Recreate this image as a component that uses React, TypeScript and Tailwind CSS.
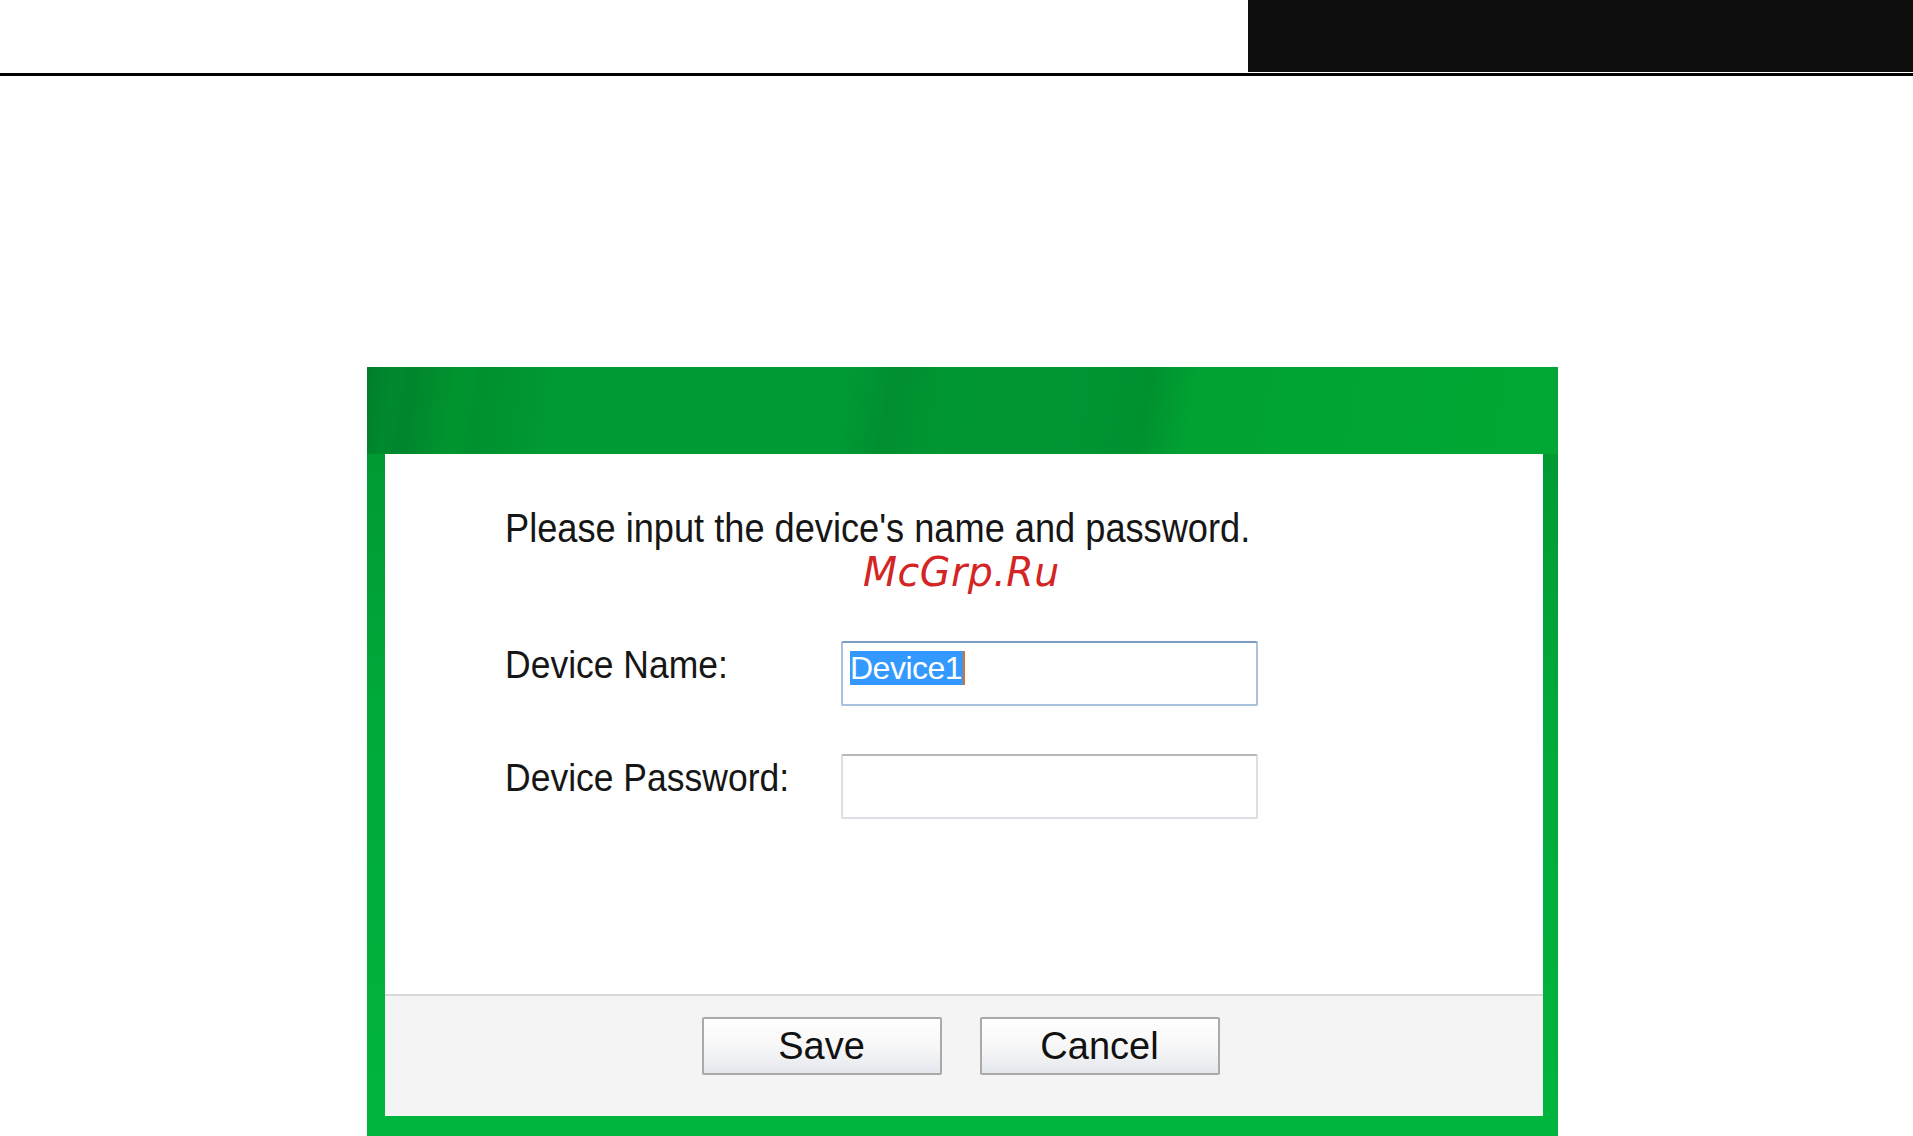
import React from "react";

export default function App() {
  return (
    <div className="w-[1913px] h-[1136px] bg-white overflow-hidden flex flex-col" style={{ fontFamily: '"Liberation Sans", Arial, sans-serif' }}>
      <div className="h-[72px] flex flex-row shrink-0">
        <div className="flex-1" />
        <div className="w-[665px] h-[72px] bg-[#0e0e0e]" />
      </div>
      <div className="h-[1px] shrink-0" />
      <div className="h-[3px] bg-black shrink-0" />
      <div className="h-[291px] shrink-0" />
      <div className="flex flex-row shrink-0">
        <div className="w-[367px] shrink-0" />
        <div className="w-[1191px] h-[769px] flex flex-col bg-[#00b33c]">
          <div className="h-[87px] shrink-0 bg-[linear-gradient(100deg,#007d2b_0%,#008a2e_2.5%,#00862d_4%,#00952f_8%,#00902f_10%,#009a34_16%,#009a35_40%,#008e2f_44%,#009632_48%,#009532_60%,#00902f_65%,#00a232_69%,#00a833_100%)]" />
          <div className="flex-1 flex flex-col pl-[18px] pr-[15px] pb-[20px] bg-[linear-gradient(180deg,#009a33_0%,#00aa3a_40%,#00b53d_100%)]">
            <div className="flex-1 flex flex-col bg-white">
              <div className="flex-1 flex flex-col pl-[120px] pt-[52px]">
                <div className="text-[36.2px] leading-[46px] text-[#161616] scale-y-[1.1] origin-left">Please input the device's name and password.</div>
                <div className="pl-[358px] mt-[-3px] text-[39.5px] leading-[44px] italic text-[#d42525] tracking-[0.5px] scale-y-[1.05]" style={{ fontFamily: '"DejaVu Sans", Verdana, sans-serif' }}>McGrp.Ru</div>
                <div className="mt-[48px] flex flex-row items-center">
                  <div className="w-[336px] text-[35.5px] leading-[44px] text-[#161616] -mt-[17px] scale-y-[1.08] origin-left">Device Name:</div>
                  <div className="w-[417px] h-[65px] border-2 border-[#a8c2e0] border-t-[#7b9cc3] rounded-[2px] bg-white flex flex-row items-start pt-[8px] pl-[7px]">
                    <span className="bg-[#3399ff] text-white text-[32px] leading-[34px] tracking-[-0.5px] pr-[1px]">Device1</span>
                    <span className="w-[2px] h-[34px] bg-[#e07020]" />
                  </div>
                </div>
                <div className="mt-[48px] flex flex-row items-center">
                  <div className="w-[336px] text-[35.5px] leading-[44px] text-[#161616] -mt-[18px] scale-y-[1.08] origin-left">Device Password:</div>
                  <div className="w-[417px] h-[65px] border-2 border-[#dcdfe6] border-t-[#b8b8b8] rounded-[2px] bg-white" />
                </div>
              </div>
              <div className="h-[122px] shrink-0 bg-[#f4f4f4] border-t-2 border-[#d9d9d9] flex flex-row justify-center items-start pt-[21px] gap-[38px] pr-[7px]">
                <button className="w-[240px] h-[58px] border-2 border-[#a9a9a9] rounded-[2px] bg-[linear-gradient(180deg,#ffffff_0%,#f7f7f7_50%,#e4e8ee_100%)] text-[38px] leading-[54px] text-[#111]">Save</button>
                <button className="w-[240px] h-[58px] border-2 border-[#a9a9a9] rounded-[2px] bg-[linear-gradient(180deg,#ffffff_0%,#f7f7f7_50%,#e4e8ee_100%)] text-[38px] leading-[54px] text-[#111]">Cancel</button>
              </div>
            </div>
          </div>
        </div>
      </div>
    </div>
  );
}
